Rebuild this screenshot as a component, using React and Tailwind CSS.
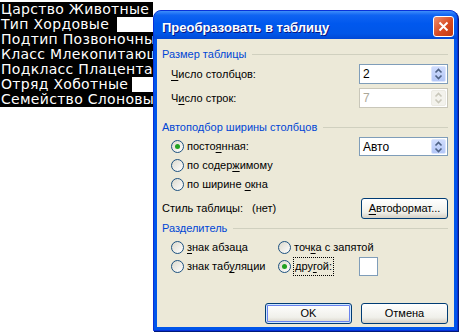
import React from 'react';

const lines = [
    { text: 'Царство Животные ', w: 'w-[153px]' },
    { text: 'Тип Хордовые', w: 'w-[117px]' },
    { text: 'Подтип Позвоночные', w: 'w-[153px]' },
    { text: 'Класс Млекопитающие', w: 'w-[153px]' },
    { text: 'Подкласс Плацентарные', w: 'w-[153px]' },
    { text: 'Отряд Хоботные', w: 'w-[132px]' },
    { text: 'Семейство Слоновые', w: 'w-[153px]' },
];

// text with one underlined access key
const Key = ({ pre, k, post }) => (
    <span>
        {pre}
        <span className="underline underline-offset-2">{k}</span>
        {post}
    </span>
);

const GroupHeader = ({ title }) => (
    <div className="flex items-center h-[14px] gap-[6px]">
        <span className="text-[#0046D5] whitespace-nowrap">{title}</span>
        <div className="flex-1 h-px bg-[#D0D0BF]" />
    </div>
);

const Arrows = ({ disabled }) => (
    <div
        className={`w-[15px] h-full rounded-[2px] border flex items-center justify-center ${
            disabled
                ? 'bg-[#F3F2EC] border-[#ECEBE4]'
                : 'bg-[linear-gradient(to_bottom,#CFDCFD,#B3C6F6)] border-[#DCE6FD]'
        }`}
    >
        <svg width="9" height="12" viewBox="0 0 9 12" fill="none">
            <path
                d="M1.5 4.5 L4.5 1.5 L7.5 4.5 M1.5 7.5 L4.5 10.5 L7.5 7.5"
                stroke={disabled ? '#C9C7BA' : '#4D6185'}
                strokeWidth="1.6"
            />
        </svg>
    </div>
);

const SpinBox = ({ value, disabled, h = 'h-[20px]' }) => (
    <div
        className={`w-[89px] ${h} border flex items-stretch p-px ${
            disabled ? 'border-[#C9C7BA] bg-white' : 'border-[#7F9DB9] bg-white'
        }`}
    >
        <span className={`flex-1 pl-[2px] flex items-center text-[12px] ${disabled ? 'text-[#ACA899]' : 'text-black'}`}>
            {value}
        </span>
        <Arrows disabled={disabled} />
    </div>
);

const Radio = ({ checked, children }) => (
    <div className="flex items-center gap-[3px]">
        <div className="w-[13px] h-[13px] rounded-full border border-[#1C5180] bg-[linear-gradient(135deg,#DCD9CD,#FFFFFF)] flex items-center justify-center">
            {checked && <div className="w-[5px] h-[5px] rounded-full bg-[#21A121]" />}
        </div>
        {children}
    </div>
);

const XpButton = ({ children, primary }) => (
    <button
        className={`w-[87px] h-[21px] rounded-[3px] border border-[#003C74] bg-[linear-gradient(to_bottom,#FFFFFF,#F0F0EA_70%,#D6D0C5)] flex items-center justify-center ${
            primary ? 'shadow-[inset_0_0_0_1px_#CEE7FF,inset_0_0_0_2px_#6982EE]' : ''
        }`}
    >
        {children}
    </button>
);

export default function App() {
    return (
        <div className="relative w-[459px] h-[332px] bg-white overflow-hidden font-['Liberation_Sans',Arial,sans-serif] text-[11px] text-black">
            {/* selected document text */}
            <div className="pt-[2px]">
                {lines.map((l) => (
                    <div
                        key={l.text}
                        className={`${l.w} h-[15px] bg-black text-white whitespace-nowrap overflow-hidden pl-[1px] font-['DejaVu_Sans',sans-serif] text-[14px] leading-[15px] tracking-[0.3px]`}
                    >
                        {l.text}
                    </div>
                ))}
            </div>

            {/* dialog window */}
            <div className="absolute left-[153px] top-[10px] w-[305px] h-[321px] rounded-t-[8px] border border-[#0831D9] bg-[#0055EA] flex flex-col overflow-hidden shadow-[1px_1px_0_#001A7A]">
                <div className="h-[28px] shrink-0 flex items-start justify-between pl-[8px] pr-[3px] bg-[linear-gradient(to_bottom,#3E8EFA_0%,#0F63F2_15%,#0058EE_45%,#0056E8_80%,#0048D6_100%)]">
                    <span className="mt-[7px] text-white font-bold text-[13px] [text-shadow:1px_1px_#0A1883]">
                        Преобразовать в таблицу
                    </span>
                    <div className="mt-[5px] w-[21px] h-[21px] rounded-[3px] border border-white bg-[linear-gradient(135deg,#EE8F6E,#D84A21_55%,#C13A12)] flex items-center justify-center">
                        <svg width="11" height="11" viewBox="0 0 11 11">
                            <path d="M1.5 1.5 L9.5 9.5 M9.5 1.5 L1.5 9.5" stroke="white" strokeWidth="2" />
                        </svg>
                    </div>
                </div>

                <div className="flex-1 mx-[3px] mb-[3px] bg-[#ECE9D8] pt-[8px] pl-[5px] pr-[6px]">
                    <GroupHeader title="Размер таблицы" />
                    <div className="mt-[3px] h-[20px] pl-[9px] flex items-center justify-between">
                        <Key pre="" k="Ч" post="исло столбцов:" />
                        <SpinBox value="2" />
                    </div>
                    <div className="mt-[4px] h-[20px] pl-[9px] flex items-center justify-between">
                        <Key pre="Ч" k="и" post="сло строк:" />
                        <SpinBox value="7" disabled />
                    </div>

                    <div className="mt-[12px]">
                        <GroupHeader title="Автоподбор ширины столбцов" />
                    </div>
                    <div className="mt-[3px] h-[19px] pl-[9px] flex items-center justify-between">
                        <Radio checked>
                            <Key pre="посто" k="я" post="нная:" />
                        </Radio>
                        <SpinBox value="Авто" h="h-[19px]" />
                    </div>
                    <div className="h-[19px] pl-[9px] flex items-center">
                        <Radio>
                            <Key pre="по содер" k="ж" post="имому" />
                        </Radio>
                    </div>
                    <div className="h-[19px] pl-[9px] flex items-center">
                        <Radio>
                            <Key pre="по ширине " k="о" post="кна" />
                        </Radio>
                    </div>

                    <div className="mt-[4px] h-[21px] flex items-center">
                        <span className="w-[90px]">Стиль таблицы:</span>
                        <span className="flex-1">(нет)</span>
                        <XpButton>
                            <Key pre="" k="А" post="втоформат..." />
                        </XpButton>
                    </div>

                    <div className="mt-[2px]">
                        <GroupHeader title="Разделитель" />
                    </div>
                    <div className="mt-[3px] h-[18px] pl-[9px] flex items-center">
                        <div className="w-[107px]">
                            <Radio>
                                <Key pre="" k="з" post="нак абзаца" />
                            </Radio>
                        </div>
                        <Radio>
                            <Key pre="точ" k="к" post="а с запятой" />
                        </Radio>
                    </div>
                    <div className="mt-[1px] h-[19px] pl-[9px] flex items-center">
                        <div className="w-[107px]">
                            <Radio>
                                <Key pre="знак таб" k="у" post="ляции" />
                            </Radio>
                        </div>
                        <div className="w-[81px]">
                            <Radio checked>
                                <span className="outline outline-1 outline-dotted outline-black px-px">
                                    <Key pre="дру" k="г" post="ой:" />
                                </span>
                            </Radio>
                        </div>
                        <div className="w-[19px] h-[19px] border border-[#7F9DB9] bg-white" />
                    </div>

                    <div className="mt-[27px] flex justify-end gap-[9px]">
                        <XpButton primary>OK</XpButton>
                        <XpButton>Отмена</XpButton>
                    </div>
                </div>
            </div>
        </div>
    );
}
